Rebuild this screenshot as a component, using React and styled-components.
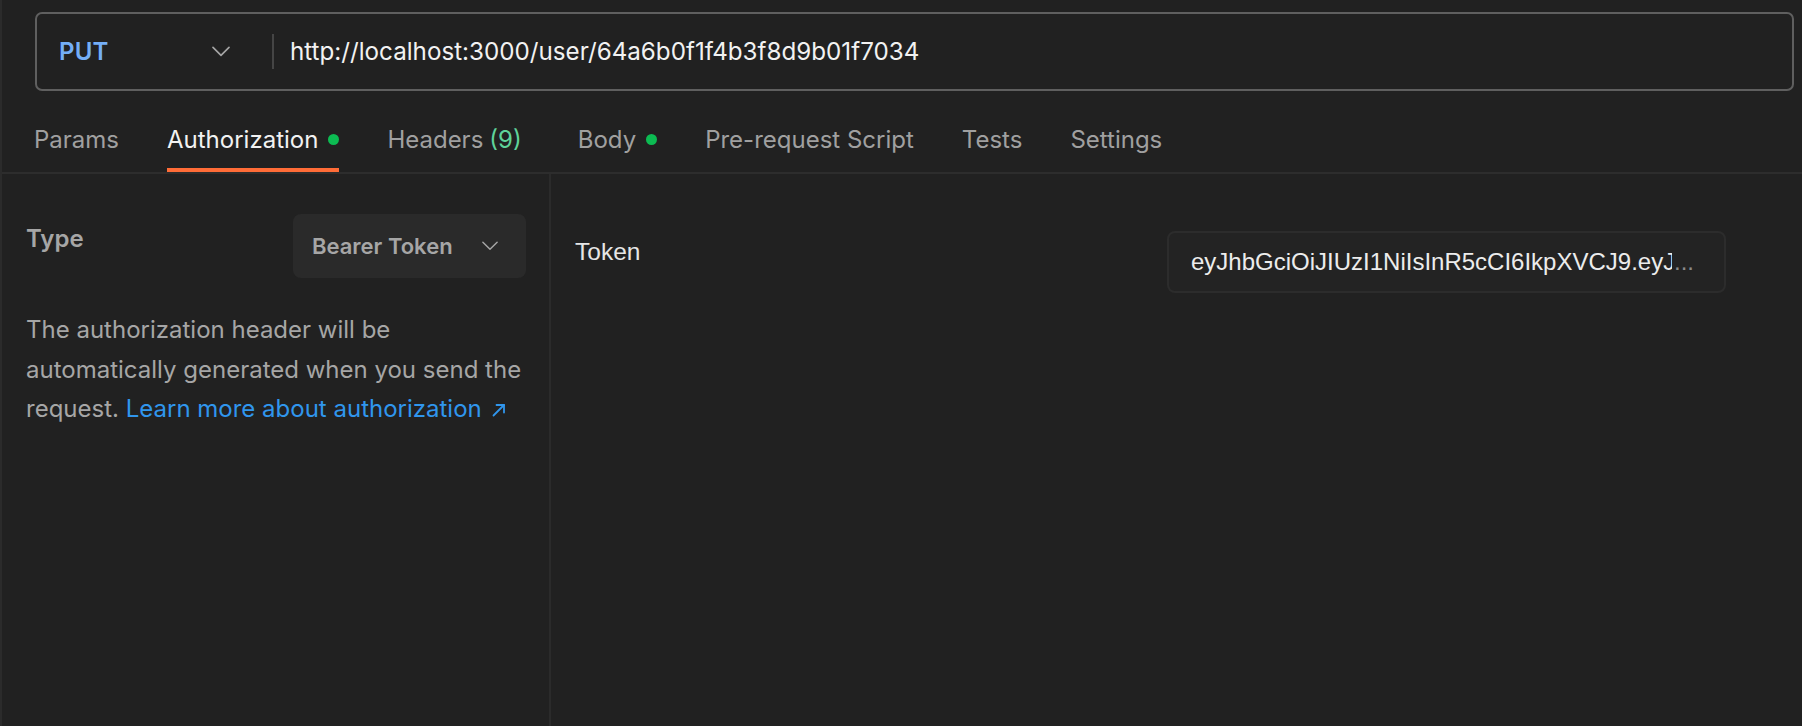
import React from 'react';
import styled, { createGlobalStyle } from 'styled-components';

const GlobalStyle = createGlobalStyle`
  html, body {
    margin: 0;
    padding: 0;
    background-color: #212121;
  }
  body {
    font-family: 'Inter', 'Noto Sans', sans-serif;
    -webkit-font-smoothing: antialiased;
  }
`

const tabs = [
  { label: 'Params' },
  { label: 'Authorization', dot: true, active: true },
  { label: 'Headers', count: 9 },
  { label: 'Body', dot: true },
  { label: 'Pre-request Script' },
  { label: 'Tests' },
  { label: 'Settings' },
]

function Chevron({ width = 18, color = '#a6a6a6' }) {
  return (
    <svg width={width} height={width * 0.6} viewBox="0 0 18 10" fill="none">
      <polyline points="1,1 9,9 17,1" stroke={color} strokeWidth="1.6" strokeLinecap="round" strokeLinejoin="round" />
    </svg>
  )
}

function ExternalArrow() {
  return (
    <svg width="16" height="16" viewBox="0 0 16 16" fill="none">
      <path d="M2.5 13.5 L13 3" stroke="#3096ed" strokeWidth="1.8" strokeLinecap="round" />
      <path d="M5.5 3 H13 V10.5" stroke="#3096ed" strokeWidth="1.8" strokeLinecap="round" strokeLinejoin="round" />
    </svg>
  )
}

function App() {
  return (
    <>
      <GlobalStyle />
      <Page>
        <UrlBar>
          <MethodSelect>
            <Method>PUT</Method>
            <Chevron />
          </MethodSelect>
          <Separator />
          <UrlText>http://localhost:3000/user/64a6b0f1f4b3f8d9b01f7034</UrlText>
        </UrlBar>

        <TabRow>
          {tabs.map((t) => (
            <Tab key={t.label} $active={t.active}>
              {t.label}
              {t.count !== undefined && <Count>({t.count})</Count>}
              {t.dot && <Dot />}
            </Tab>
          ))}
        </TabRow>

        <Content>
          <LeftPanel>
            <TypeRow>
              <TypeLabel>Type</TypeLabel>
              <TypeSelect>
                <span>Bearer Token</span>
                <Chevron width={16} color="#a6a6a6" />
              </TypeSelect>
            </TypeRow>
            <Description>
              The authorization header will be automatically generated when you send the
              request. <Link href="#">Learn more about authorization <ExternalArrow /></Link>
            </Description>
          </LeftPanel>

          <RightPanel>
            <TokenRow>
              <TokenLabel>Token</TokenLabel>
              <TokenInput>
                <TokenValue>eyJhbGciOiJIUzI1NiIsInR5cCI6IkpXVCJ9.eyJfaWQiOiI2NGE2YjBmMWY0YjNmOGQ5YjAxZjcwMzQifQ</TokenValue>
                <Ellipsis>...</Ellipsis>
              </TokenInput>
            </TokenRow>
          </RightPanel>
        </Content>
      </Page>
    </>
  )
}

export default App

const Page = styled.div`
  width: 1802px;
  height: 726px;
  box-sizing: border-box;
  border-left: 2px solid #2b2b2b;
  display: flex;
  flex-direction: column;
  overflow: hidden;
`

const UrlBar = styled.div`
  margin: 12px 8px 0 33px;
  height: 79px;
  box-sizing: border-box;
  border: 2px solid #5f5f5f;
  border-radius: 7px;
  display: flex;
  align-items: center;
`

const MethodSelect = styled.div`
  width: 235px;
  box-sizing: border-box;
  padding: 0 42px 0 22px;
  display: flex;
  align-items: center;
  justify-content: space-between;
`

const Method = styled.span`
  color: #74aef6;
  font-size: 24px;
  font-weight: 600;
  letter-spacing: 0.2px;
`

const Separator = styled.div`
  width: 2px;
  height: 35px;
  background-color: #454545;
`

const UrlText = styled.div`
  margin-left: 16px;
  color: #f2f2f2;
  font-size: 24.2px;
`

const TabRow = styled.div`
  height: 83px;
  box-sizing: border-box;
  padding-left: 32px;
  display: flex;
  gap: 48px;
  border-bottom: 2px solid #2d2d2d;
`

const Tab = styled.div`
  height: 81px;
  box-sizing: border-box;
  padding-top: 20px;
  display: flex;
  align-items: center;
  font-size: 24px;
  color: ${(p) => (p.$active ? '#f2f2f2' : '#a0a0a0')};
  border-bottom: 4px solid ${(p) => (p.$active ? '#ff6c37' : 'transparent')};
`

const Count = styled.span`
  margin-left: 6px;
  margin-right: 8px;
  color: #5fd39a;
`

const Dot = styled.span`
  width: 11px;
  height: 11px;
  margin-left: 10px;
  border-radius: 50%;
  background-color: #0cbb52;
`

const Content = styled.div`
  flex: 1;
  display: flex;
`

const LeftPanel = styled.div`
  width: 549px;
  box-sizing: border-box;
  padding: 40px 23px 0 24px;
  border-right: 2px solid #2b2b2b;
`

const TypeRow = styled.div`
  display: flex;
  justify-content: space-between;
  align-items: flex-start;
`

const TypeLabel = styled.div`
  padding-top: 10px;
  color: #a6a6a6;
  font-size: 24px;
  font-weight: 600;
`

const TypeSelect = styled.div`
  width: 233px;
  height: 64px;
  box-sizing: border-box;
  padding: 0 28px 0 19px;
  border-radius: 8px;
  background-color: #2a2a2a;
  display: flex;
  align-items: center;
  justify-content: space-between;
  color: #a6a6a6;
  font-size: 22px;
  font-weight: 600;
`

const Description = styled.p`
  margin: 32px -6px 0 0;
  color: #a6a6a6;
  font-size: 24px;
  line-height: 39.7px;
`

const Link = styled.a`
  color: #3096ed;
  text-decoration: none;
  svg {
    vertical-align: -1px;
    margin-left: 2px;
  }
`

const RightPanel = styled.div`
  flex: 1;
  box-sizing: border-box;
  padding: 57px 76px 0 24px;
`

const TokenRow = styled.div`
  display: flex;
  justify-content: space-between;
  align-items: flex-start;
`

const TokenLabel = styled.div`
  padding-top: 7px;
  color: #e6e6e6;
  font-family: 'Liberation Sans', Arial, sans-serif;
  font-size: 24.5px;
`

const TokenInput = styled.div`
  width: 559px;
  height: 62px;
  box-sizing: border-box;
  padding: 0 30px 0 22px;
  border: 2px solid #2c2c2c;
  border-radius: 8px;
  background-color: #232323;
  display: flex;
  align-items: center;
  font-family: 'Liberation Sans', Arial, sans-serif;
  font-size: 24px;
`

const TokenValue = styled.span`
  flex: 1;
  overflow: hidden;
  white-space: nowrap;
  color: #ececec;
`

const Ellipsis = styled.span`
  color: #8a8a8a;
  margin-left: 2px;
`
